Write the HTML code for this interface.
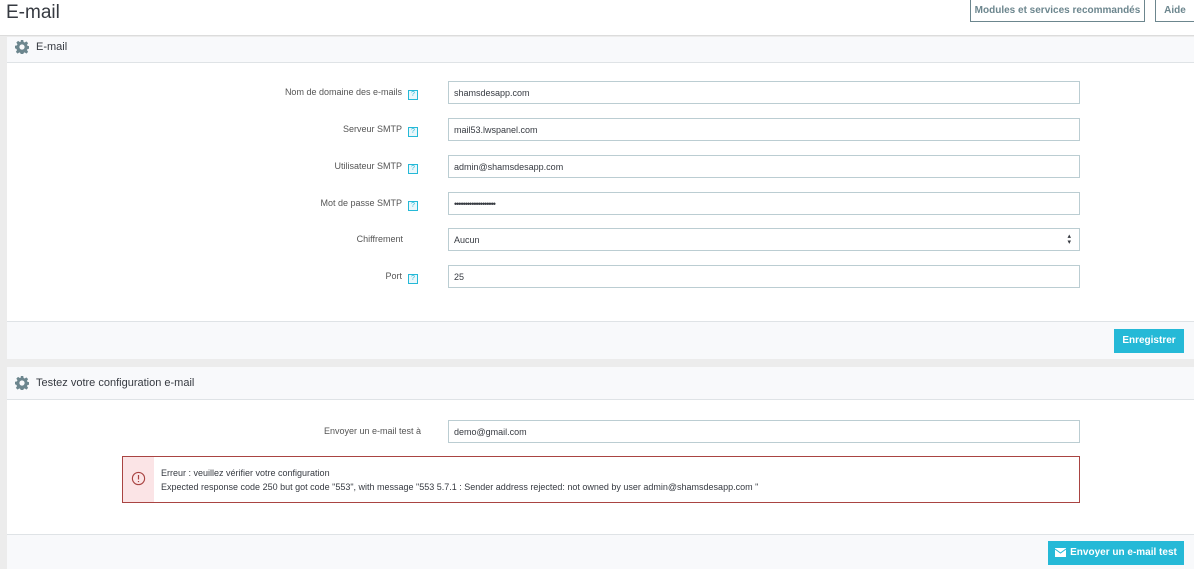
<!DOCTYPE html>
<html><head><meta charset="utf-8"><style>
*{box-sizing:border-box;margin:0;padding:0}
body{width:1194px;height:569px;overflow:hidden;background:#ececec;font-family:"Liberation Sans",sans-serif;color:#363a41;position:relative}
.a{position:absolute}
.top{left:0;top:0;width:1194px;height:36px;background:#fff;border-bottom:1px solid #dcdcdc}
.title{left:6px;top:2px;font-size:19px;color:#363a41}
.tbtn{top:0;height:22px;border:1px solid #6c868e;border-top:none;background:#fff;color:#6c868e;font-size:10px;font-weight:bold;line-height:21px;text-align:center}
.panel{left:7px;width:1187px;background:#fff}
.ph{left:0;width:100%;height:26px;background:#f8f9fb;border-bottom:1px solid #dfe3e6;font-size:11px;line-height:20px;color:#363a41}
.ph svg{position:absolute;left:8px;top:3px}
.ph span{position:absolute;left:29px;top:0}
.foot{left:0;width:100%;background:#f8f9fb;border-top:1px solid #dfe3e6}
.lbl{width:411px;left:0;text-align:right;font-size:9px;color:#555;line-height:22px}
.help{display:inline-block;width:10px;height:10px;border:1px solid #25b9d7;color:#25b9d7;font-size:7px;line-height:8px;text-align:center;margin-left:6px;vertical-align:-1px;background:#eaf7fb}
.inp{left:441px;width:632px;height:23px;border:1px solid #bbcdd2;background:#fff;font-size:9px;line-height:22px;padding-left:5px;color:#363a41}
.btn{background:#25b9d7;color:#fff;font-size:10px;font-weight:bold;text-align:center;line-height:24px;height:24px}
</style></head><body>
<div class="a top"></div>
<div class="a title">E-mail</div>
<div class="a tbtn" style="left:970px;width:175px">Modules et services recommandés</div>
<div class="a tbtn" style="left:1155px;width:39px;border-right:none">Aide</div>

<div class="a panel" style="top:37px;height:322px">
 <div class="a ph" style="top:0"><svg width="14" height="14" viewBox="0 0 16 16"><path fill="#6c868e" d="M6.6 0h2.8l.4 2.2 1.3.6 1.9-1.3 2 2-1.3 1.9.6 1.3 2.2.4v2.8l-2.2.4-.6 1.3 1.3 1.9-2 2-1.900-1.3-1.3.6-.4 2.2H6.6l-.4-2.2-1.3-.6-1.9 1.3-2-2 1.3-1.9-.6-1.3L0 9.4V6.6l2.2-.4.6-1.3L1.5 3l2-2 1.9 1.3 1.3-.6zM8 5a3 3 0 100 6 3 3 0 000-6z"/></svg><span>E-mail</span></div>
 <div class="a lbl" style="top:44px">Nom de domaine des e-mails<span class="help">?</span></div>
 <div class="a inp" style="top:44px">shamsdesapp.com</div>
 <div class="a lbl" style="top:81px">Serveur SMTP<span class="help">?</span></div>
 <div class="a inp" style="top:81px">mail53.lwspanel.com</div>
 <div class="a lbl" style="top:118px">Utilisateur SMTP<span class="help">?</span></div>
 <div class="a inp" style="top:118px">admin@shamsdesapp.com</div>
 <div class="a lbl" style="top:155px">Mot de passe SMTP<span class="help">?</span></div>
 <div class="a inp" style="top:155px;letter-spacing:-1px">•••••••••••••••••••</div>
 <div class="a lbl" style="top:191px;padding-right:15px">Chiffrement</div>
 <div class="a inp" style="top:191px">Aucun<span style="position:absolute;right:8px;top:-3px;font-size:7px">&#x25B4;</span><span style="position:absolute;right:8px;top:3px;font-size:7px">&#x25BE;</span></div>
 <div class="a lbl" style="top:228px">Port<span class="help">?</span></div>
 <div class="a inp" style="top:228px">25</div>
 <div class="a foot" style="top:284px;height:38px"><div class="a btn" style="left:1107px;top:7px;width:70px">Enregistrer</div></div>
</div>

<div class="a panel" style="top:367px;height:202px">
 <div class="a ph" style="top:0;height:33px;line-height:32px"><svg width="14" height="14" viewBox="0 0 16 16" style="top:9px"><path fill="#6c868e" d="M6.6 0h2.8l.4 2.2 1.3.6 1.9-1.3 2 2-1.3 1.9.6 1.3 2.2.4v2.8l-2.2.4-.6 1.3 1.3 1.9-2 2-1.9-1.3-1.3.6-.4 2.2H6.6l-.4-2.2-1.3-.6-1.9 1.3-2-2 1.3-1.9-.6-1.3L0 9.4V6.6l2.2-.4.6-1.3L1.5 3l2-2 1.9 1.3 1.3-.6zM8 5a3 3 0 100 6 3 3 0 000-6z"/></svg><span>Testez votre configuration e-mail</span></div>
 <div class="a lbl" style="top:53px;width:414px">Envoyer un e-mail test à</div>
 <div class="a inp" style="top:53px">demo@gmail.com</div>
 <div class="a" style="left:115px;top:89px;width:958px;height:47px;border:1px solid #a94442;background:#fff">
  <div class="a" style="left:0;top:0;width:31px;height:45px;background:#fbe4e6"><svg class="a" style="left:8px;top:14px" width="15" height="15" viewBox="0 0 16 16"><circle cx="8" cy="8" r="6.5" fill="none" stroke="#a94442" stroke-width="1.2"/><path d="M8 4.2v4.8M8 10.6v1.3" stroke="#a94442" stroke-width="1.3"/></svg></div>
  <div class="a" style="left:38px;top:9px;font-size:9px;line-height:14px;color:#363a41">Erreur : veuillez vérifier votre configuration<br>Expected response code 250 but got code "553", with message "553 5.7.1 : Sender address rejected: not owned by user admin@shamsdesapp.com "</div>
 </div>
 <div class="a foot" style="top:167px;height:35px"><div class="a btn" style="left:1041px;top:6px;width:136px"><svg style="vertical-align:-2px;margin-right:4px" width="11" height="9" viewBox="0 0 11 9"><rect width="11" height="9" fill="#fff"/><path d="M0 1l5.5 4L11 1" stroke="#25b9d7" fill="none"/></svg>Envoyer un e-mail test</div></div>
</div>
</body></html>
